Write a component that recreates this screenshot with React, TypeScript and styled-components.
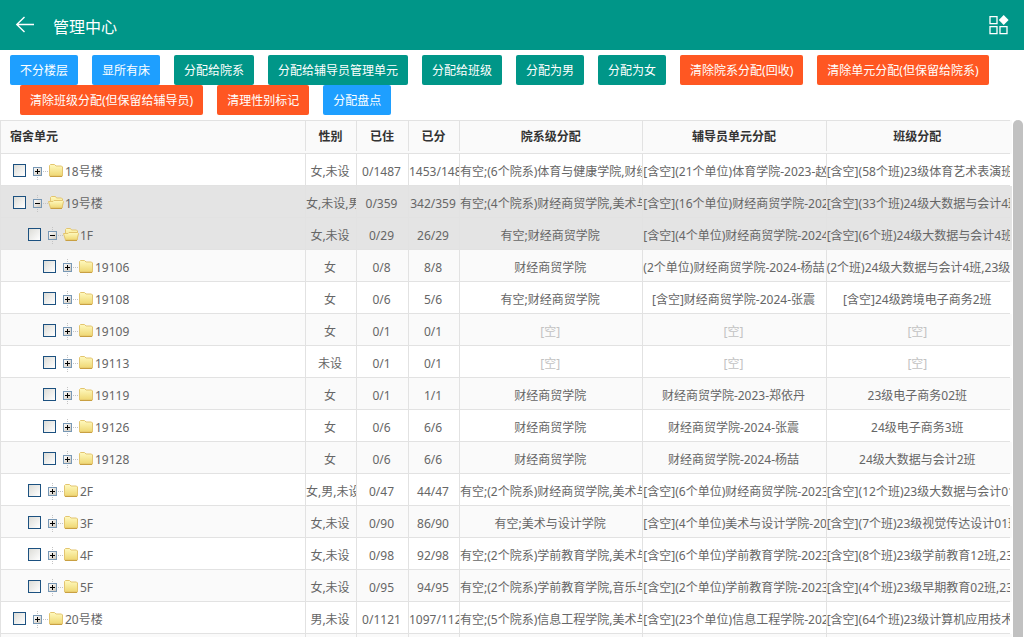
import React from "react";
import styled, { createGlobalStyle } from "styled-components";

const line = "#e2e2e2";
const stripe = "#fafafa";
const selected = "#e4e4e4";

const GlobalStyle = createGlobalStyle`
  * { box-sizing: border-box; }
  body {
    margin: 0;
    background: #fff;
    color: #666;
    font: 12px/24px "Noto Sans", "Noto Sans CJK SC", sans-serif;
  }
  button { font-family: inherit; }
`;

const Page = styled.div`
  display: flex;
  flex-direction: column;
  height: 100vh;
  overflow: hidden;
`;

const TopBar = styled.header`
  display: flex;
  flex: none;
  align-items: center;
  height: 50px;
  padding: 0 14px;
  background: #009688;
  color: #fff;
`;

const IconButton = styled.button`
  display: flex;
  padding: 0;
  border: 0;
  background: none;
  color: inherit;
  cursor: pointer;
`;

const Title = styled.h1`
  flex: 1;
  margin: 0;
  padding: 4px 0 0 17px;
  font-size: 16px;
  font-weight: 400;
  line-height: 24px;
`;

const Toolbar = styled.div`
  flex: none;
  padding: 5px 10px 5px 0;
`;

const ActionGroup = styled.div<{ $indent?: boolean }>`
  display: flex;
  flex-wrap: wrap;
  padding-left: ${(p) => (p.$indent ? "10px" : "0")};
`;

const tones = { blue: "#1e9fff", teal: "#009688", orange: "#ff5722" };
type Tone = keyof typeof tones;

const ActionButton = styled.button<{ $tone: Tone }>`
  height: 30px;
  margin: 0 4px 0 10px;
  padding: 2px 10px 0;
  border: 0;
  border-radius: 2px;
  background: ${(p) => tones[p.$tone]};
  color: #fff;
  font-size: 12px;
  line-height: 28px;
  white-space: nowrap;
  cursor: pointer;
`;

const Viewport = styled.main`
  display: flex;
  flex: 1;
  min-height: 0;
  overflow: hidden;
  padding-right: 1px;
`;

const Grid = styled.table`
  flex: 1;
  align-self: flex-start;
  min-width: 0;
  width: 100%;
  margin-right: 3px;
  table-layout: fixed;
  border-collapse: separate;
  border-spacing: 0;
  border-left: 1px solid ${line};
`;

const Column = styled.col<{ $width?: number }>`
  width: ${(p) => (p.$width ? `${p.$width}px` : "auto")};
`;

const HeadCell = styled.th<{ $left?: boolean }>`
  height: 34px;
  padding: ${(p) => (p.$left ? "0 9px" : "0 2px 0 0")};
  border-top: 1px solid ${line};
  border-bottom: 1px solid ${line};
  background: linear-gradient(${line}, ${line}) right top / 1px 30px no-repeat ${stripe};
  color: #333;
  font-weight: 700;
  text-align: ${(p) => (p.$left ? "left" : "center")};

  &:last-child {
    background: ${stripe};
    box-shadow: 2px 0 0 ${stripe};
  }
`;

const Cell = styled.td`
  height: 32px;
  padding: 5px 2px 0 0;
  overflow: hidden;
  border-right: 1px solid ${line};
  border-bottom: 1px solid ${line};
  text-align: center;
  white-space: nowrap;

  &:first-child { padding: 3px 0 0; }
  &:last-child { border-right: 0; }
`;

const Row = styled.tr<{ $selected?: boolean }>`
  --row: ${(p) => (p.$selected ? selected : "#fff")};
  &:nth-child(even) { --row: ${(p) => (p.$selected ? selected : stripe)}; }
  ${Cell} { background: var(--row); }
  ${Cell}:last-child { box-shadow: 2px 0 0 var(--row); }
`;

const Unassigned = styled.span`
  color: #c2c2c2;
`;

const Node = styled.div<{ $level: number }>`
  display: flex;
  align-items: center;
  height: 28px;
  padding-left: ${(p) => 12 + p.$level * 15}px;
`;

const Tick = styled.input`
  appearance: none;
  flex: none;
  width: 13px;
  height: 13px;
  margin: 0 5px 2px 0;
  border: 1px solid #1c5180;
  background: linear-gradient(135deg, #dcdcd7, #fff);
`;

const NodeLabel = styled.span`
  padding: 2px 0 0 1px;
`;

const ScrollThumb = styled.div`
  flex: none;
  width: 10px;
  border-radius: 5px 5px 0 0;
  background: #c1c1c1;
`;

const BackIcon = () => (
  <svg width="22" height="20" viewBox="0 0 22 20" fill="none" stroke="currentColor" strokeWidth="1.4">
    <path d="M10.500 2 2.800 9.500l7.700 7.500M2.800 9.500H20" />
  </svg>
);

const AppsIcon = () => (
  <svg width="21" height="20" viewBox="0 0 21 20" fill="none" stroke="currentColor" strokeWidth="1.3">
    <path d="M1 1.600h7v7H1zM1 11.600h7v7H1zM11 11.600h7v7h-7z" />
    <path d="M14.700.1l4.900 4.900-4.900 4.900-4.900-4.900z" fill="currentColor" stroke="none" />
  </svg>
);

const Expander = ({ open, first }: { open?: boolean; first?: boolean }) => (
  <svg width="17" height="18" viewBox="0 0 17 18" shapeRendering="crispEdges">
    <defs>
      <linearGradient id="expanderFill" x1="0" y1="0" x2="1" y2="1">
        <stop offset="0" stopColor="#fff" />
        <stop offset="1" stopColor="#cdc6ba" />
      </linearGradient>
    </defs>
    {!first && <path d="M6.500 1v4" stroke="#c4c4c4" strokeDasharray="1 1" />}
    <path d="M6.500 15v3M12 9.500h5" stroke="#c4c4c4" strokeDasharray="1 1" />
    <rect x="2.500" y="5.500" width="8" height="8" rx="1" fill="url(#expanderFill)" stroke="#7898b5" />
    <path d={open ? "M4 9.500h5" : "M4 9.500h5M6.500 7v5"} stroke="#000" />
  </svg>
);

const Folder = ({ open }: { open?: boolean }) => (
  <svg width="16" height="16" viewBox="0 0 16 16">
    <defs>
      <linearGradient id="folderFill" x1="0" y1="0" x2="0" y2="1">
        <stop offset="0" stopColor="#fffac0" />
        <stop offset="1" stopColor="#efd772" />
      </linearGradient>
    </defs>
    {open ? (
      <g fill="url(#folderFill)" stroke="#e3c570">
        <path d="M2.500 12.500V2.500l1-1h4l1 1.500h5l1 1v8.500z" />
        <path d="M.5 6.500h4.500l1-1h8.500l1 1-1.500 6.500H2.500z" />
        <path d="M2.500 13.500h11.500" stroke="#c9a042" />
      </g>
    ) : (
      <g fill="url(#folderFill)" stroke="#e3c570">
        <path d="M1.500 13V2.500l1-1h4l1.500 1.500h5.500l1 1v9z" />
        <path d="M2 13.500h12" stroke="#c9a042" />
      </g>
    )}
  </svg>
);

const actions: { text: string; tone: Tone }[] = [
  { text: "不分楼层", tone: "blue" },
  { text: "显所有床", tone: "blue" },
  { text: "分配给院系", tone: "teal" },
  { text: "分配给辅导员管理单元", tone: "teal" },
  { text: "分配给班级", tone: "teal" },
  { text: "分配为男", tone: "teal" },
  { text: "分配为女", tone: "teal" },
  { text: "清除院系分配(回收)", tone: "orange" },
  { text: "清除单元分配(但保留给院系)", tone: "orange" },
];

const moreActions: { text: string; tone: Tone }[] = [
  { text: "清除班级分配(但保留给辅导员)", tone: "orange" },
  { text: "清理性别标记", tone: "orange" },
  { text: "分配盘点", tone: "blue" },
];

const headings = ["宿舍单元", "性别", "已住", "已分", "院系级分配", "辅导员单元分配", "班级分配"];
const widths = [305, 51, 52, 51, undefined, undefined, undefined];

interface Unit {
  level: number;
  name: string;
  open?: boolean;
  cells: string[];
}

const units: Unit[] = [
  { level: 0, name: "18号楼", cells: ["女,未设", "0/1487", "1453/1487", "有空;(6个院系)体育与健康学院,财经商贸学院", "[含空](21个单位)体育学院-2023-赵", "[含空](58个班)23级体育艺术表演班"] },
  { level: 0, name: "19号楼", open: true, cells: ["女,未设,男", "0/359", "342/359", "有空;(4个院系)财经商贸学院,美术与设计学院", "[含空](16个单位)财经商贸学院-2024", "[含空](33个班)24级大数据与会计4班"] },
  { level: 1, name: "1F", open: true, cells: ["女,未设", "0/29", "26/29", "有空;财经商贸学院", "[含空](4个单位)财经商贸学院-2024", "[含空](6个班)24级大数据与会计4班"] },
  { level: 2, name: "19106", cells: ["女", "0/8", "8/8", "财经商贸学院", "(2个单位)财经商贸学院-2024-杨喆", "(2个班)24级大数据与会计4班,23级"] },
  { level: 2, name: "19108", cells: ["女", "0/6", "5/6", "有空;财经商贸学院", "[含空]财经商贸学院-2024-张震", "[含空]24级跨境电子商务2班"] },
  { level: 2, name: "19109", cells: ["女", "0/1", "0/1", "[空]", "[空]", "[空]"] },
  { level: 2, name: "19113", cells: ["未设", "0/1", "0/1", "[空]", "[空]", "[空]"] },
  { level: 2, name: "19119", cells: ["女", "0/1", "1/1", "财经商贸学院", "财经商贸学院-2023-郑依丹", "23级电子商务02班"] },
  { level: 2, name: "19126", cells: ["女", "0/6", "6/6", "财经商贸学院", "财经商贸学院-2024-张震", "24级电子商务3班"] },
  { level: 2, name: "19128", cells: ["女", "0/6", "6/6", "财经商贸学院", "财经商贸学院-2024-杨喆", "24级大数据与会计2班"] },
  { level: 1, name: "2F", cells: ["女,男,未设", "0/47", "44/47", "有空;(2个院系)财经商贸学院,美术与设计学院", "[含空](6个单位)财经商贸学院-2023", "[含空](12个班)23级大数据与会计01班"] },
  { level: 1, name: "3F", cells: ["女,未设", "0/90", "86/90", "有空;美术与设计学院", "[含空](4个单位)美术与设计学院-2023", "[含空](7个班)23级视觉传达设计01班"] },
  { level: 1, name: "4F", cells: ["女,未设", "0/98", "92/98", "有空;(2个院系)学前教育学院,美术与设计学院", "[含空](6个单位)学前教育学院-2023", "[含空](8个班)23级学前教育12班,23级"] },
  { level: 1, name: "5F", cells: ["女,未设", "0/95", "94/95", "有空;(2个院系)学前教育学院,音乐与舞蹈学院", "[含空](2个单位)学前教育学院-2023", "[含空](4个班)23级早期教育02班,23级"] },
  { level: 0, name: "20号楼", cells: ["男,未设", "0/1121", "1097/1121", "有空;(5个院系)信息工程学院,美术与设计学院", "[含空](23个单位)信息工程学院-2023", "[含空](64个班)23级计算机应用技术"] },
];

export default function App() {
  return (
    <Page>
      <GlobalStyle />
      <TopBar>
        <IconButton aria-label="返回"><BackIcon /></IconButton>
        <Title>管理中心</Title>
        <IconButton aria-label="应用"><AppsIcon /></IconButton>
      </TopBar>
      <Toolbar>
        <ActionGroup>
          {actions.map((a) => <ActionButton key={a.text} $tone={a.tone}>{a.text}</ActionButton>)}
        </ActionGroup>
        <ActionGroup $indent>
          {moreActions.map((a) => <ActionButton key={a.text} $tone={a.tone}>{a.text}</ActionButton>)}
        </ActionGroup>
      </Toolbar>
      <Viewport>
        <Grid>
          <colgroup>
            {widths.map((w, i) => <Column key={i} $width={w} />)}
          </colgroup>
          <thead>
            <tr>
              {headings.map((h, i) => <HeadCell key={h} scope="col" $left={i === 0}>{h}</HeadCell>)}
            </tr>
          </thead>
          <tbody>
            {units.map((u, r) => (
              <Row key={u.name} $selected={u.open}>
                <Cell>
                  <Node $level={u.level}>
                    <Tick type="checkbox" aria-label={u.name} />
                    <Expander open={u.open} first={r === 0} />
                    <Folder open={u.open} />
                    <NodeLabel>{u.name}</NodeLabel>
                  </Node>
                </Cell>
                {u.cells.map((c, i) => (
                  <Cell key={i}>{c === "[空]" ? <Unassigned>{c}</Unassigned> : c}</Cell>
                ))}
              </Row>
            ))}
            <Row aria-hidden="true">
              {headings.map((h) => <Cell key={h} />)}
            </Row>
          </tbody>
        </Grid>
        <ScrollThumb />
      </Viewport>
    </Page>
  );
}
